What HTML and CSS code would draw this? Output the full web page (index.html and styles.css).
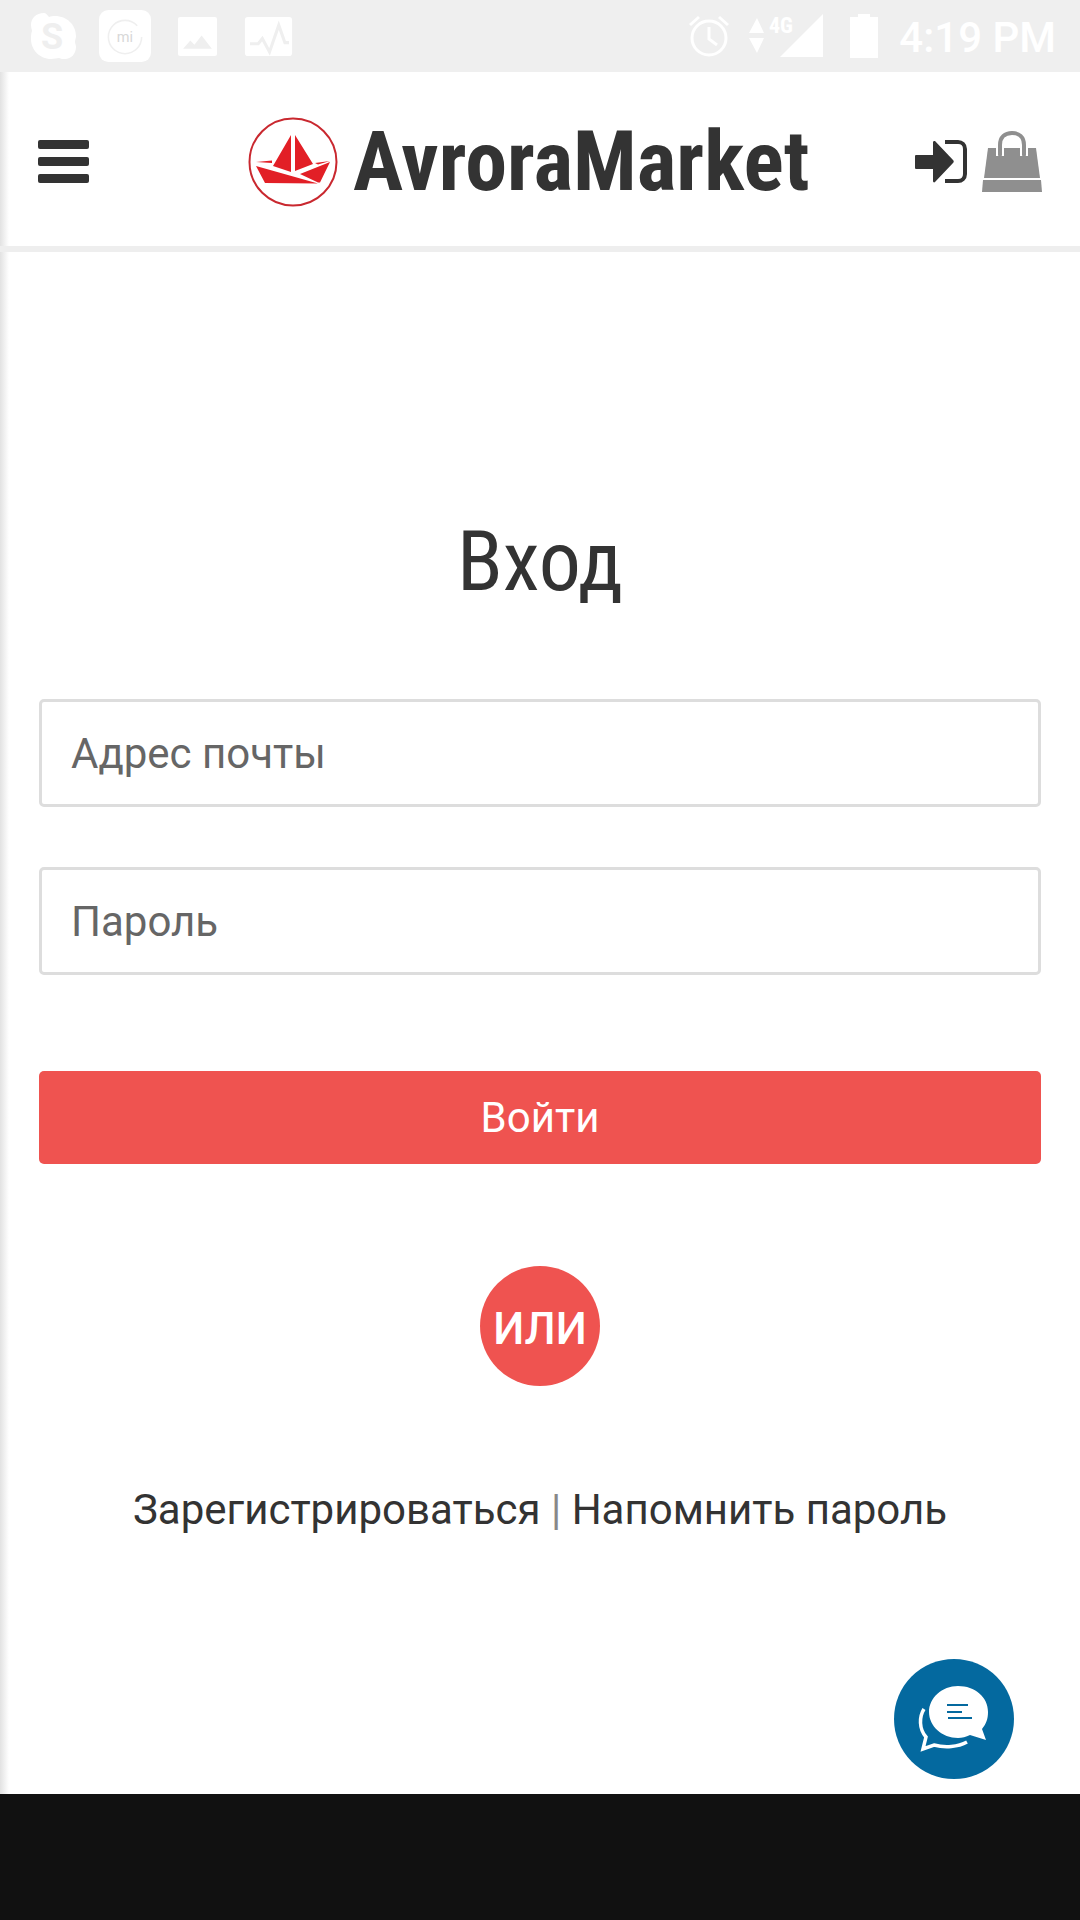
FILE: index.html
```html
<!DOCTYPE html>
<html lang="ru">
    <head>
        <meta charset="UTF-8" />
        <meta name="viewport" content="width=device-width, initial-scale=1.0" />
        <title>AvroraMarket</title>
        <link rel="stylesheet" href="styles.css">
    </head>
    <body>
        <div class="status-bar">
            <div class="status-left">
                <svg class="skype-icon" width="46" height="48" viewBox="0 0 46 48">
                    <path fill="#fff" d="M14 1C6 1 1 6 1 13c0 3 1 5 1 6-1 3-1 5-1 8 0 11 9 20 20 20 3 0 6-1 8-1 2 1 4 1 6 1 6 0 11-5 11-12 0-2-1-4-1-5 0-2 1-4 1-6C46 13 37 4 25 4c-2 0-4 0-6 1-2-2-3-4-5-4z"/>
                    <text class="skype-s" x="22" y="37">S</text>
                </svg>
                <svg width="52" height="52" viewBox="0 0 50 50">
                    <rect x="0" y="0" width="50" height="50" rx="9" fill="#fff"/>
                    <circle cx="25" cy="26" r="16" fill="none" stroke="#efefef" stroke-width="1.5" stroke-dasharray="88 12"/>
                    <text class="mi-text" x="25" y="31">mi</text>
                </svg>
                <svg width="39" height="39" viewBox="0 0 38 38">
                    <rect width="38" height="38" rx="2" fill="#fff"/>
                    <path fill="#efefef" d="M5 31l7-8 4 4 7-9 10 13z"/>
                </svg>
                <svg width="49" height="39" viewBox="0 0 46 38">
                    <rect width="46" height="38" rx="3" fill="#fff"/>
                    <path fill="none" stroke="#efefef" stroke-width="3" d="M5 26h8l4-5 7 13 9-26 6 17h4"/>
                </svg>
            </div>
            <div class="status-right">
                <svg class="alarm-icon" width="42" height="44" viewBox="0 0 42 44">
                    <circle cx="21" cy="24" r="17" fill="none" stroke="#fff" stroke-width="3"/>
                    <path fill="none" stroke="#fff" stroke-width="3" d="M21 13v12l8 6M2 11L11 3M40 11L31 3"/>
                </svg>
                <svg class="net-icon" width="74" height="44" viewBox="0 0 74 44">
                    <path fill="#fff" d="M8 4l7 15H0zM0 24h15L8 39zM74 0v43H31z"/>
                    <text class="net-text" x="20" y="19">4G</text>
                </svg>
                <svg class="battery-icon" width="28" height="44" viewBox="0 0 28 44">
                    <path fill="#fff" d="M8 0h12v3h8v41H0V3h8z"/>
                </svg>
                <span class="status-time">4:19 PM</span>
            </div>
        </div>

        <div class="page">
            <header class="site-header">
                <svg class="menu-icon" width="51" height="44" viewBox="0 0 51 44">
                    <rect y="0" width="51" height="9" rx="2"/>
                    <rect y="17" width="51" height="9" rx="2"/>
                    <rect y="34" width="51" height="9" rx="2"/>
                </svg>
                <div class="logo">
                    <svg width="90" height="90" viewBox="0 0 90 90">
                        <circle cx="45" cy="45" r="43.5" fill="#fff" stroke="#c9282f" stroke-width="2"/>
                        <path fill="#e21f26" d="M43 18v37l-18-6zM47 18l18 29-18 7zM8 49l62 17.500-53-.5zM52 57l30-12-10 20.500h-2zM8 45l16-1.500v2.500zM67 46l15-2-12 3.500z"/>
                    </svg>
                    <span class="logo-text">AvroraMarket</span>
                </div>
                <div class="header-actions">
                    <svg width="52" height="44" viewBox="0 0 52 44">
                        <path fill="#333" d="M1 15h17V2c0-1 1-1 2-1l18 19c1 1 1 2 0 3L20 42c-1 1-2 0-2-1V29H1c-1 0-1-1-1-1V16s0-1 1-1z"/>
                        <path fill="none" stroke="#333" stroke-width="4" d="M30 2h13c4 0 7 3 7 7v25c0 4-3 7-7 7H30"/>
                    </svg>
                    <svg width="60" height="62" viewBox="0 0 60 62">
                        <path fill="#8f8f8f" d="M6 17h48l4 30H2z"/>
                        <path fill="#8f8f8f" d="M1 49h58l1 12H0z"/>
                        <path fill="none" stroke="#fff" stroke-width="8" d="M18 25V14C18 6 23 3 30 3s12 3 12 11v11"/>
                        <path fill="none" stroke="#8f8f8f" stroke-width="4" stroke-linecap="round" d="M18 24V14C18 6 23 2 30 2s12 4 12 12v10"/>
                    </svg>
                </div>
            </header>

            <main class="login">
                <h1>Вход</h1>
                <form class="login-form">
                    <input class="field" type="text" placeholder="Адрес почты" />
                    <input class="field" type="password" placeholder="Пароль" />
                    <button class="submit-button" type="button">Войти</button>
                </form>
                <div class="or-badge">или</div>
                <p class="login-links">
                    <a href="#">Зарегистрироваться</a>
                    <span class="link-sep">|</span>
                    <a href="#">Напомнить пароль</a>
                </p>
            </main>

            <button class="chat-button" type="button" aria-label="Чат">
                <svg width="72" height="68" viewBox="0 0 72 68">
                    <path fill="#fff" d="M40 1c17 0 30 11 30 26 0 7-2 12-6 17l4 11-16-5c-4 2-8 3-12 3-16 0-29-12-29-26S24 1 40 1z"/>
                    <path fill="none" stroke="#fff" stroke-width="3.500" d="M6 24C1 32 1 44 8 52l-3 12 11-4c11 3 24 2 33-3"/>
                    <path fill="none" stroke="#04699f" stroke-width="2" d="M29 20h21M29 27h15M30 33h24"/>
                </svg>
            </button>
        </div>

        <div class="nav-bar"></div>
    </body>
</html>
```

FILE: styles.css
```css
* {
    box-sizing: border-box;
}
body {
    margin: 0;
    width: 1080px;
    height: 1920px;
    display: flex;
    flex-direction: column;
    font-family: Roboto, sans-serif;
    background-color: white;
    color: #333;
    overflow: hidden;
}
.status-bar {
    height: 72px;
    flex: none;
    background-color: #efefef;
    display: flex;
    justify-content: space-between;
    align-items: center;
    padding: 0 24px 0 30px;
}
.status-left {
    display: flex;
    align-items: center;
    gap: 27px;
}
.skype-icon {
    margin-right: -4px;
}
.status-right {
    display: flex;
    align-items: center;
    color: white;
}
.net-icon {
    margin-left: 19px;
}
.battery-icon {
    margin-left: 27px;
}
.status-time {
    font-size: 42px;
    font-weight: 500;
    line-height: 1;
    margin: 4px 0 0 21px;
}
.skype-s {
    font-family: Roboto, sans-serif;
    font-size: 36px;
    font-weight: 700;
    text-anchor: middle;
    fill: #efefef;
}
.mi-text {
    font-family: Roboto, sans-serif;
    font-size: 14px;
    text-anchor: middle;
    fill: #d8d8d8;
}
.net-text {
    font-family: "Roboto Condensed", Roboto, sans-serif;
    font-stretch: 75%;
    font-size: 22px;
    font-weight: 700;
    fill: white;
}
.page {
    position: relative;
    flex: 1;
    display: flex;
    flex-direction: column;
    background: linear-gradient(to right, #e2e2e2, white) no-repeat left / 9px 100%;
}
.site-header {
    height: 180px;
    flex: none;
    border-bottom: 6px solid #eee;
    display: flex;
    align-items: center;
    padding: 6px 38px 0 38px;
}
.menu-icon {
    fill: #333;
}
.logo {
    display: flex;
    align-items: center;
    gap: 15px;
    margin-left: 159px;
}
.logo-text {
    font-family: "Roboto Condensed", Roboto, sans-serif;
    font-stretch: 75%;
    font-size: 84px;
    font-weight: 700;
    line-height: 1;
}
.header-actions {
    display: flex;
    align-items: center;
    gap: 15px;
    margin-left: auto;
}
.login {
    flex: 1;
    display: flex;
    flex-direction: column;
    align-items: center;
    padding: 0 39px;
}
h1 {
    font-family: "Roboto Condensed", Roboto, sans-serif;
    font-stretch: 75%;
    font-size: 84px;
    font-weight: 400;
    line-height: 90px;
    margin: 265px 0 0;
}
.login-form {
    width: 100%;
    margin-top: 92px;
    display: flex;
    flex-direction: column;
}
.field {
    height: 108px;
    border: 3px solid #ddd;
    border-radius: 5px;
    padding: 0 29px;
    margin-bottom: 60px;
    font-family: Roboto, sans-serif;
    font-size: 42px;
    color: #333;
    background-color: white;
}
.field::placeholder {
    color: #666;
    opacity: 1;
}
.submit-button {
    height: 93px;
    margin-top: 36px;
    background-color: #ef5350;
    color: white;
    border: none;
    border-radius: 5px;
    font-family: Roboto, sans-serif;
    font-size: 42px;
}
.or-badge {
    width: 120px;
    height: 120px;
    margin-top: 102px;
    padding-top: 5px;
    border-radius: 50%;
    background-color: #ef5350;
    color: white;
    font-size: 44px;
    font-weight: 500;
    text-transform: uppercase;
    display: flex;
    align-items: center;
    justify-content: center;
}
.login-links {
    margin: 92px 0 0;
    font-size: 42px;
    line-height: 64px;
}
.login-links a {
    color: #333;
    text-decoration: none;
}
.link-sep {
    color: #888;
}
.chat-button {
    position: absolute;
    right: 66px;
    bottom: 15px;
    width: 120px;
    height: 120px;
    padding: 0;
    border: none;
    border-radius: 50%;
    background-color: #04699f;
    display: flex;
    align-items: center;
    justify-content: center;
}
.nav-bar {
    height: 126px;
    flex: none;
    background-color: #111;
}
```
